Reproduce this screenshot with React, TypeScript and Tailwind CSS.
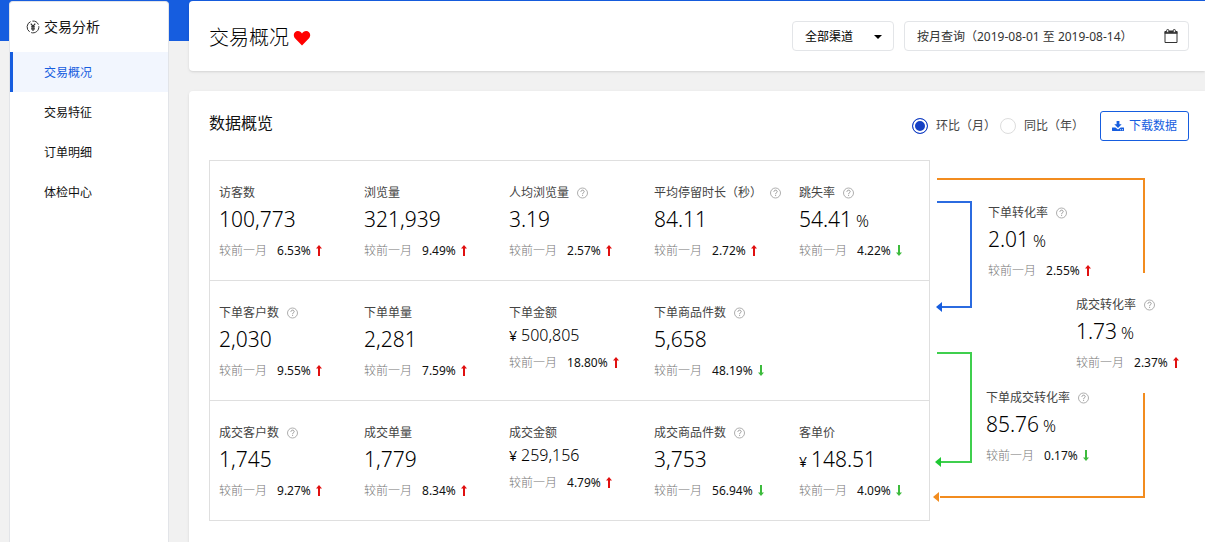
import React, { useState } from 'react';
import clsx from 'clsx';

type Metric = {
  label: string;
  value: string;
  prefix?: string;
  suffix?: string;
  change: string;
  trend: 'up' | 'down';
  help?: boolean;
  small?: boolean;
};

const menu = ['交易概况', '交易特征', '订单明细', '体检中心'];

const rows: Metric[][] = [
  [
    { label: '访客数', value: '100,773', change: '6.53%', trend: 'up' },
    { label: '浏览量', value: '321,939', change: '9.49%', trend: 'up' },
    { label: '人均浏览量', value: '3.19', change: '2.57%', trend: 'up', help: true },
    { label: '平均停留时长（秒）', value: '84.11', change: '2.72%', trend: 'up', help: true },
    { label: '跳失率', value: '54.41', suffix: '%', change: '4.22%', trend: 'down', help: true }
  ],
  [
    { label: '下单客户数', value: '2,030', change: '9.55%', trend: 'up', help: true },
    { label: '下单单量', value: '2,281', change: '7.59%', trend: 'up' },
    { label: '下单金额', value: '500,805', prefix: '¥', change: '18.80%', trend: 'up', small: true },
    { label: '下单商品件数', value: '5,658', change: '48.19%', trend: 'down', help: true }
  ],
  [
    { label: '成交客户数', value: '1,745', change: '9.27%', trend: 'up', help: true },
    { label: '成交单量', value: '1,779', change: '8.34%', trend: 'up' },
    { label: '成交金额', value: '259,156', prefix: '¥', change: '4.79%', trend: 'up', small: true },
    { label: '成交商品件数', value: '3,753', change: '56.94%', trend: 'down', help: true },
    { label: '客单价', value: '148.51', prefix: '¥', change: '4.09%', trend: 'down' }
  ]
];

const orderRate: Metric = { label: '下单转化率', value: '2.01', suffix: '%', change: '2.55%', trend: 'up', help: true };
const dealRate: Metric = { label: '成交转化率', value: '1.73', suffix: '%', change: '2.37%', trend: 'up', help: true };
const orderDealRate: Metric = { label: '下单成交转化率', value: '85.76', suffix: '%', change: '0.17%', trend: 'down', help: true };

const YenIcon = () => <svg className="h-3.5 w-3.5" viewBox="0 0 14 14" fill="none" stroke="#333">
  <path d="M4.6 1.6A5.9 5.9 0 0 0 3.6 11.8M5.2 12.6A5.9 5.9 0 0 0 12.8 6.2M12.4 4.6A5.9 5.9 0 0 0 6.4 1.1" />
  <path d="M4.8 3.6 7 6.4l2.2-2.8M7 6.4v4.6M5 6.8h4M5 8.8h4" strokeWidth="1.2" />
</svg>;

const HelpIcon = () => <svg className="h-3 w-3 shrink-0" viewBox="0 0 12 12" fill="none" stroke="#999">
  <circle cx="5.5" cy="6" r="5" strokeWidth="0.8" />
  <path d="M3.9 4.8c0-2.2 3.3-2.1 3.3-.2 0 1.1-1.6 1.2-1.6 2.4M5.6 7.8v1.1" strokeWidth="1" />
</svg>;

const TrendIcon = ({ trend }: { trend: 'up' | 'down' }) => <svg className={clsx('h-3 w-1.5 shrink-0', trend === 'up' ? 'text-[#e01010]' : 'text-[#3dbb3d]')} viewBox="0 0 6 12" fill="currentColor">
  {trend === 'up'
    ? <path d="M3 0 6 3.6H4V11H2V3.6H0z" />
    : <path d="M3 11 6 7.4H4V0H2v7.4H0z" />}
</svg>;

const CalendarIcon = () => <svg className="h-4 w-3.5 shrink-0" viewBox="0 0 14 16" fill="none" stroke="#333">
  <path d="M1 3.5h12v11H1z" strokeLinejoin="round" />
  <path d="M.6 3.4h12.8v2.4H.6z" fill="#333" stroke="none" />
  <rect x="2.7" y="1.5" width="2" height="3" rx="0.8" fill="#fff" />
  <rect x="9.3" y="1.5" width="2" height="3" rx="0.8" fill="#fff" />
  <path d="M5 3h4" />
</svg>;

const DownloadIcon = () => <svg className="h-3 w-3" viewBox="0 0 12 12" fill="currentColor">
  <path d="M4.6 1h2.8v3.3h2.3L6 8 2.3 4.3h2.3z" />
  <path fillRule="evenodd" d="M.4 7.4h3L6 9.6l2.6-2.2h3q.4 0 .4.4v2.8q0 .4-.4.4H.4q-.4 0-.4-.4V7.800q0-.4.4-.4zM8.2 9.300v.9h.9v-.9zM10 9.300v.9h.9v-.9z" />
</svg>;

const MetricItem = ({ metric }: { metric: Metric }) => <div className="whitespace-nowrap text-xs leading-[18px]">
  <div className="flex items-center gap-2 text-[#444]">
    {metric.label}
    {metric.help && <HelpIcon />}
  </div>
  <div className={clsx('flex items-baseline gap-1 text-black', metric.small ? 'text-base leading-[26px]' : 'text-[21px] leading-[34px]')}>
    {metric.prefix && <span className="text-sm leading-4">{metric.prefix}</span>}
    <span className="font-light">{metric.value}</span>
    {metric.suffix && <span className="text-base font-light leading-4">{metric.suffix}</span>}
  </div>
  <div className="mt-1.5 flex items-center">
    <span className="font-light text-[#777]">较前一月</span>
    <span className="ml-2.5 mr-[5px] text-[#111]">{metric.change}</span>
    <TrendIcon trend={metric.trend} />
  </div>
</div>;

const ConversionDiagram = () => <div className="relative h-[361px] w-[275px] shrink-0">
  <svg className="absolute left-0 top-0" width="275" height="361" fill="none" strokeWidth="2">
    <path d="M7 19h207v94M214 233v104H10" stroke="#f28c1f" />
    <path d="M9 332v10l-6-5z" fill="#f28c1f" />
    <path d="M7 42h34v105H11" stroke="#2b6be0" />
    <path d="M12 142v10l-6-5z" fill="#165ddf" />
    <path d="M7 193h34v109H10" stroke="#3fcf4e" />
    <path d="M11 297v10l-6-5z" fill="#1ec832" />
  </svg>
  <div className="absolute left-[58px] top-[44px]">
    <MetricItem metric={orderRate} />
  </div>
  <div className="absolute left-[146px] top-[136px]">
    <MetricItem metric={dealRate} />
  </div>
  <div className="absolute left-[56px] top-[229px]">
    <MetricItem metric={orderDealRate} />
  </div>
</div>;

const App = () => {
  const [active, setActive] = useState('交易概况');
  const [compare, setCompare] = useState('month');

  return <div className="flex min-h-screen flex-col overflow-x-hidden bg-[#f1f1f1] font-['Noto_Sans','Noto_Sans_CJK_SC',sans-serif] text-xs text-[#111]">
    <div className="h-[41px] bg-[#165ddf]" />
    <div className="-mt-10 flex flex-1 gap-5 pl-[9px]">
      {/* Sidebar */}
      <aside className="w-40 shrink-0 rounded-t border border-b-0 border-[#e2e4e8] bg-white">
        <h2 className="flex h-[50px] items-center gap-1 pl-4 text-sm">
          <YenIcon />
          交易分析
        </h2>
        <nav>
          {menu.map(name => <a key={name} href="#" onClick={() => setActive(name)} className={clsx('flex h-10 items-center border-l-[3px] pl-[31px] pt-0.5', active === name ? 'border-[#165ddf] bg-[#f2f6fe] text-[#165ddf]' : 'border-transparent')}>
            {name}
          </a>)}
        </nav>
      </aside>

      <main className="flex min-w-0 flex-1 flex-col gap-5">
        {/* Page title and filters */}
        <header className="flex h-[70px] items-center rounded-l bg-white pl-5 pr-4 shadow">
          <h1 className="flex items-center gap-1 pt-1 text-xl font-light text-black">
            交易概况
            <svg className="h-[18px] w-[18px]" viewBox="0 0 18 18" fill="#f00">
              <path d="M9 16.5 2.2 9.6C-.8 6 1.400 2 4.900 2 6.700 2 8.200 3 9 4.400 9.800 3 11.300 2 13.100 2c3.500 0 5.700 4 2.700 7.600z" />
            </svg>
          </h1>
          <div className="relative ml-auto">
            <select aria-label="渠道" className="h-[30px] w-[102px] appearance-none rounded-sm border border-[#e3e5e8] bg-white pl-3 pt-0.5 text-xs text-black">
              <option>全部渠道</option>
            </select>
            <svg className="pointer-events-none absolute right-3 top-[14px] h-1 w-2" viewBox="0 0 8 4">
              <path d="M0 0h8L4 4z" />
            </svg>
          </div>
          <label className="ml-2.5 flex h-[30px] w-[285px] items-center rounded-sm border border-[#e3e5e8] pl-3 pr-2.5">
            <input type="text" readOnly aria-label="查询日期" value="按月查询（2019-08-01 至 2019-08-14）" className="min-w-0 flex-1 pt-0.5 text-xs text-[#333] outline-none" />
            <CalendarIcon />
          </label>
        </header>

        {/* Data overview */}
        <section className="flex-1 rounded-tl bg-white pb-5 pl-5 pt-5 shadow">
          <div className="flex h-[30px] items-center pr-4">
            <h2 className="mr-auto self-start text-base">数据概览</h2>
            <label className="flex items-center gap-2 text-[#444]">
              <input type="radio" name="compare" checked={compare === 'month'} onChange={() => setCompare('month')} className="h-4 w-4 appearance-none rounded-full border border-[#ddd] checked:border-[#1540c4] checked:bg-[#1540c4] checked:shadow-[inset_0_0_0_2px_#fff]" />
              环比（月）
            </label>
            <label className="ml-1 flex items-center gap-2 text-[#444]">
              <input type="radio" name="compare" checked={compare === 'year'} onChange={() => setCompare('year')} className="h-4 w-4 appearance-none rounded-full border border-[#ddd] checked:border-[#1540c4] checked:bg-[#1540c4] checked:shadow-[inset_0_0_0_2px_#fff]" />
              同比（年）
            </label>
            <button className="ml-4 flex h-[30px] items-center gap-[5px] rounded-[3px] border border-[#165ddf] px-[11px] text-[#165ddf]">
              <DownloadIcon />
              下载数据
            </button>
          </div>

          <div className="mt-[19px] flex">
            <div className="min-w-0 flex-1 border border-t-0 border-[#dfdfdf]">
              {rows.map((row, i) => <div key={i} className="grid h-[120px] grid-cols-[145fr_145fr_145fr_145fr_130fr] border-t border-[#dfdfdf] pl-[9px] pt-[23px]">
                {row.map(metric => <MetricItem key={metric.label} metric={metric} />)}
              </div>)}
            </div>
            <ConversionDiagram />
          </div>
        </section>
      </main>
    </div>
  </div>;
};
export default App;
